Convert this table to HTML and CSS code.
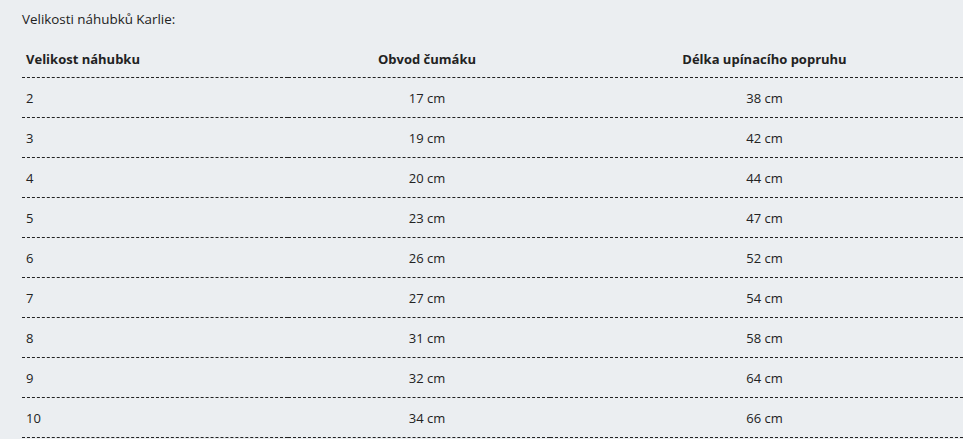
FILE: index.html
```html
<!DOCTYPE html>
<html lang="cs">
<head>
<meta charset="utf-8">
<link rel="stylesheet" href="styles.css">
</head>
<body>
<div class="page">
  <p class="title">Velikosti náhubků Karlie:</p>
  <table class="sizes">
    <colgroup>
      <col class="c1"><col class="c2"><col class="c3">
    </colgroup>
    <thead>
      <tr><th class="first">Velikost náhubku</th><th>Obvod čumáku</th><th>Délka upínacího popruhu</th></tr>
    </thead>
    <tbody>
      <tr><td class="first">2</td><td>17 cm</td><td>38 cm</td></tr>
      <tr><td class="first">3</td><td>19 cm</td><td>42 cm</td></tr>
      <tr><td class="first">4</td><td>20 cm</td><td>44 cm</td></tr>
      <tr><td class="first">5</td><td>23 cm</td><td>47 cm</td></tr>
      <tr><td class="first">6</td><td>26 cm</td><td>52 cm</td></tr>
      <tr><td class="first">7</td><td>27 cm</td><td>54 cm</td></tr>
      <tr><td class="first">8</td><td>31 cm</td><td>58 cm</td></tr>
      <tr><td class="first">9</td><td>32 cm</td><td>64 cm</td></tr>
      <tr><td class="first">10</td><td>34 cm</td><td>66 cm</td></tr>
    </tbody>
  </table>
</div>
</body>
</html>
```
FILE: styles.css
```css
html, body {
  margin: 0;
  padding: 0;
  background: #ebeef1;
}
body {
  font-family: "Open Sans", "Noto Sans", sans-serif;
  color: #222;
  font-size: 13px;
}
.page {
  padding: 9px 0 0 22px;
}
.title {
  margin: 0 0 9px 0;
  line-height: 20px;
  font-size: 13.4px;
}
.sizes {
  border-collapse: collapse;
  table-layout: fixed;
  width: 941px;
}
.c1 { width: 266px; }
.c2 { width: 262px; }
.c3 { width: 413px; }
.sizes th, .sizes td {
  padding: 0 0 0 16px;
  text-align: center;
  border-bottom: 1px dashed #222;
  white-space: nowrap;
}
.sizes th {
  font-weight: 700;
  padding-top: 4px;
  line-height: 35px;
}
.sizes td {
  padding-top: 2px;
  line-height: 37px;
}
.sizes .first {
  text-align: left;
  padding-left: 4px;
}
```
